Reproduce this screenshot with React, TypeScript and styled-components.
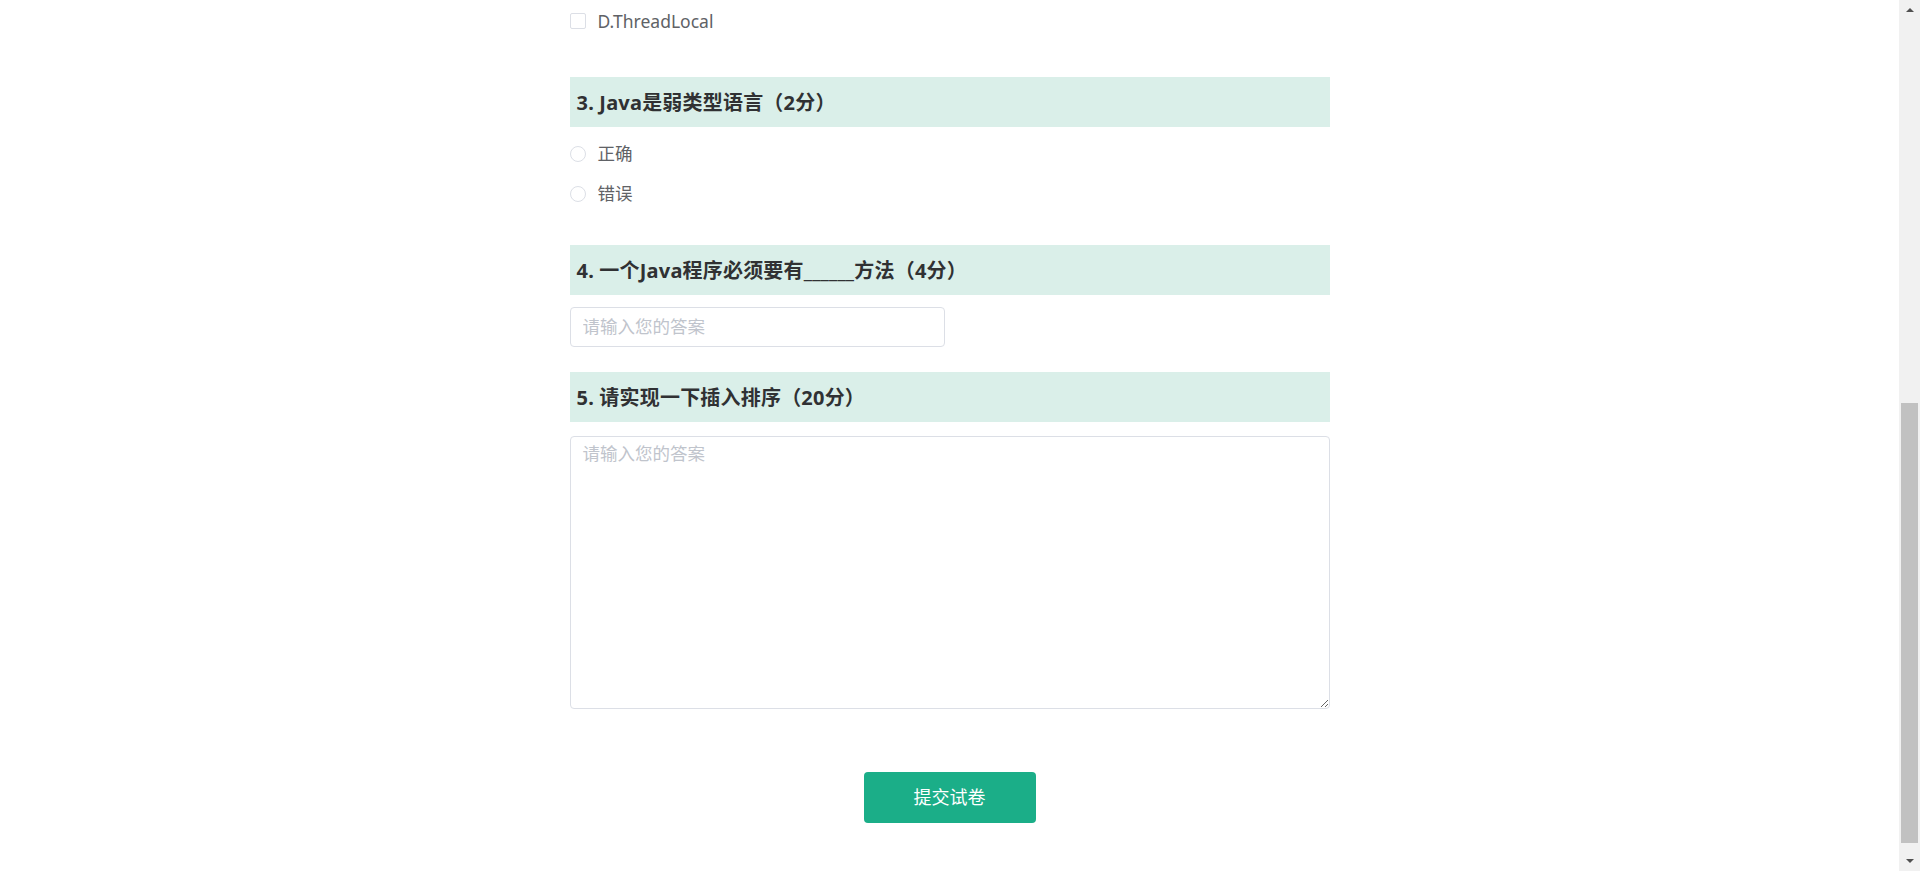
import React, { useState } from 'react'
import styled, { createGlobalStyle } from 'styled-components'

const COLORS = {
  headerBg: '#daefe9',
  title: '#303133',
  text: '#606266',
  border: '#dcdfe6',
  placeholder: '#c0c4cc',
  green: '#1bae88',
  track: '#f1f1f1',
  thumb: '#c1c1c1',
  arrow: '#505050',
};

const GlobalStyle = createGlobalStyle`
  html, body {
    margin: 0;
    padding: 0;
    height: 100%;
    overflow: hidden;
    background: #fff;
    font-family: "Noto Sans", "Noto Sans CJK SC", sans-serif;
  }
  * { box-sizing: border-box; }
`;

const Page = styled.div`
  display: flex;
  height: 100vh;
  width: 100vw;
`;

const Main = styled.main`
  flex: 1;
  overflow: hidden;
`;

const Paper = styled.div`
  width: 760px;
  margin: 0 auto;
  padding-top: 11px;
  display: flex;
  flex-direction: column;
`;

const Question = styled.section`
  display: flex;
  flex-direction: column;
`;

const QuestionTitle = styled.h3`
  margin: 0;
  height: 50px;
  padding: 0 7px 2px;
  display: flex;
  align-items: center;
  background: ${COLORS.headerBg};
  color: ${COLORS.title};
  font-size: 20px;
  font-weight: 700;
  letter-spacing: 0.2px;
`;

const OptionList = styled.div<{ $top?: number; $bottom?: number }>`
  display: flex;
  flex-direction: column;
  gap: 20px;
  padding: ${(p) => p.$top ?? 17}px 0 ${(p) => p.$bottom ?? 41}px;
`;

const Option = styled.label`
  height: 20px;
  display: flex;
  align-items: center;
  gap: 12px;
  color: ${COLORS.text};
  font-size: 17.5px;
  line-height: 20px;
  cursor: pointer;
`;

const OptionText = styled.span<{ $latin?: boolean }>`
  padding-bottom: ${(p) => (p.$latin ? 0 : 3)}px;
`;

const Box = styled.span<{ $round?: boolean; $checked?: boolean }>`
  width: 16px;
  height: 16px;
  flex: none;
  border: 1px solid ${(p) => (p.$checked ? COLORS.green : COLORS.border)};
  border-radius: ${(p) => (p.$round ? '50%' : '2px')};
  background: ${(p) => (p.$checked ? COLORS.green : '#fff')};
`;

const TextInput = styled.input`
  width: 375px;
  height: 40px;
  margin: 12px 0 25px;
  padding: 0 12px 2px;
  border: 1px solid ${COLORS.border};
  border-radius: 4px;
  font-family: inherit;
  font-size: 17.5px;
  color: ${COLORS.text};
  outline: none;
  &::placeholder { color: ${COLORS.placeholder}; }
`;

const TextArea = styled.textarea`
  width: 100%;
  height: 273px;
  margin-top: 14px;
  padding: 3px 12px;
  border: 1px solid ${COLORS.border};
  border-radius: 4px;
  font-family: inherit;
  font-size: 17.5px;
  line-height: 1.5;
  color: ${COLORS.text};
  outline: none;
  resize: vertical;
  &::placeholder { color: ${COLORS.placeholder}; }
`;

const Actions = styled.div`
  display: flex;
  justify-content: center;
  padding-top: 63px;
`;

const SubmitButton = styled.button`
  width: 172px;
  height: 51px;
  padding: 0 0 3px;
  border: none;
  border-radius: 4px;
  background: ${COLORS.green};
  color: #fff;
  font-family: inherit;
  font-size: 18px;
  cursor: pointer;
`;

// fake windows-style scrollbar on the right edge
const ScrollBar = styled.div`
  width: 21px;
  flex: none;
  display: flex;
  flex-direction: column;
  background: ${COLORS.track};
`;

const ArrowButton = styled.div<{ $down?: boolean }>`
  height: ${(p) => (p.$down ? 21 : 20)}px;
  display: flex;
  align-items: center;
  justify-content: center;
  &::after {
    content: '';
    width: 0;
    height: 0;
    border-left: 4px solid transparent;
    border-right: 4px solid transparent;
    ${(p) =>
      p.$down
        ? `border-top: 4px solid ${COLORS.arrow};`
        : `border-bottom: 4px solid ${COLORS.arrow};`}
  }
`;

const Track = styled.div`
  flex: 1;
  display: flex;
  flex-direction: column;
  justify-content: flex-end;
  padding: 0 2px 7px;
`;

const Thumb = styled.div`
  height: 440px;
  background: ${COLORS.thumb};
`;

function App() {
  const [q3, setQ3] = useState<string | null>(null);
  const [d, setD] = useState(false);

  return (
    <>
      <GlobalStyle />
      <Page>
        <Main>
          <Paper>
            <OptionList $top={0} $bottom={46}>
              <Option onClick={() => setD(!d)}>
                <Box $checked={d} />
                <OptionText $latin>D.ThreadLocal</OptionText>
              </Option>
            </OptionList>

            <Question>
              <QuestionTitle>3. Java是弱类型语言（2分）</QuestionTitle>
              <OptionList>
                {['正确', '错误'].map((o) => (
                  <Option key={o} onClick={() => setQ3(o)}>
                    <Box $round $checked={q3 === o} />
                    <OptionText>{o}</OptionText>
                  </Option>
                ))}
              </OptionList>
            </Question>

            <Question>
              <QuestionTitle>4. 一个Java程序必须要有______方法（4分）</QuestionTitle>
              <TextInput placeholder="请输入您的答案" />
            </Question>

            <Question>
              <QuestionTitle>5. 请实现一下插入排序（20分）</QuestionTitle>
              <TextArea placeholder="请输入您的答案" />
            </Question>

            <Actions>
              <SubmitButton>提交试卷</SubmitButton>
            </Actions>
          </Paper>
        </Main>
        <ScrollBar>
          <ArrowButton />
          <Track>
            <Thumb />
          </Track>
          <ArrowButton $down />
        </ScrollBar>
      </Page>
    </>
  )
}

export default App
